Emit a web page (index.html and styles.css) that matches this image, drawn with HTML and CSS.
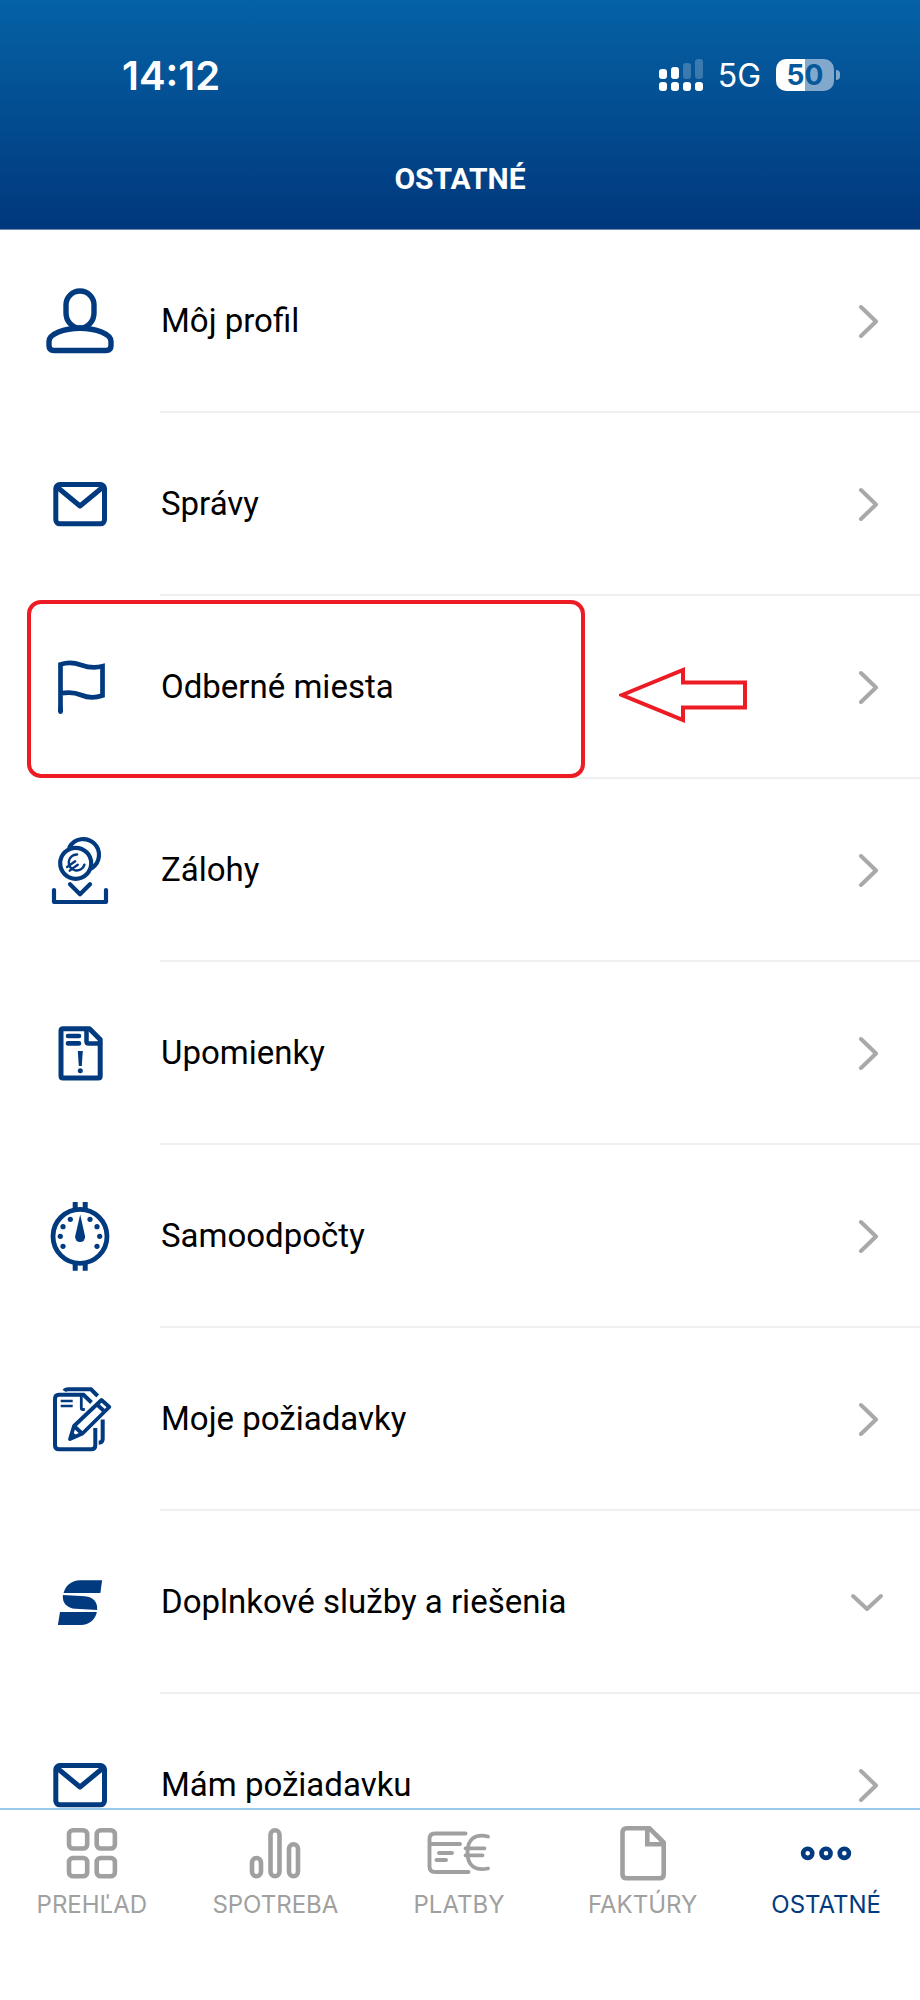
FILE: index.html
```html
<!DOCTYPE html>
<html lang="sk">
<head>
    <meta charset="UTF-8">
    <meta name="viewport" content="width=device-width, initial-scale=1.0">
    <title>Ostatné</title>
    <link rel="stylesheet" href="styles.css">
</head>
<body>
    <header class="header">
        <div class="status-bar">
            <span class="time">14:12</span>
            <div class="status-right">
                <svg class="signal" viewBox="0 0 44 32" fill="#fff">
                    <rect x="0" y="10" width="8" height="10" rx="3"/>
                    <rect x="12" y="8" width="8" height="12" rx="3"/>
                    <rect x="24" y="4" width="8" height="16" rx="3" opacity=".22"/>
                    <rect x="36" y="0" width="8" height="20" rx="3" opacity=".22"/>
                    <rect x="0" y="23" width="8" height="9" rx="3"/>
                    <rect x="12" y="23" width="8" height="9" rx="3"/>
                    <rect x="24" y="23" width="8" height="9" rx="3"/>
                    <rect x="36" y="23" width="8" height="9" rx="3"/>
                </svg>
                <span class="network">5G</span>
                <span class="battery">50</span>
            </div>
        </div>
        <h1 class="title">OSTATNÉ</h1>
    </header>

    <main class="menu">
        <a class="row" href="#profil">
            <svg class="icon" viewBox="0 0 73 73" stroke-width="5.4">
                <path d="M22 21a14 14 0 0 1 28 0v8c0 8-6 15-14 15s-14-7-14-15z"/>
                <path d="M36 44.3C20 44.3 5 50 5 57.5v4q0 5 5 5h52q5 0 5-5v-4C67 50 52 44.3 36 44.3z"/>
            </svg>
            <span class="label">Môj profil</span>
            <svg class="chevron" viewBox="0 0 35 35"><path d="M12 4l15 14.5-15 14.5"/></svg>
        </a>
        <a class="row" href="#spravy">
            <svg class="icon" viewBox="0 0 73 73" stroke-width="5">
                <rect x="11.8" y="17.5" width="48.7" height="39.3" rx="4"/>
                <path d="M13 20l23 19 23-19"/>
            </svg>
            <span class="label">Správy</span>
            <svg class="chevron" viewBox="0 0 35 35"><path d="M12 4l15 14.5-15 14.5"/></svg>
        </a>
        <a class="row" href="#odberne-miesta">
            <svg class="icon miter" viewBox="0 0 73 73" stroke-width="4.7">
                <path d="M16.5 62V14.5C24 12 30 12.5 37 15S50 18.5 58.5 16.3V45.5C50 48.5 44 48 37 45S24 42 16.5 43.5"/>
                <path d="M16.5 58v3.7" stroke-linecap="round"/>
            </svg>
            <span class="label">Odberné miesta</span>
            <svg class="chevron" viewBox="0 0 35 35"><path d="M12 4l15 14.5-15 14.5"/></svg>
            <span class="highlight"></span>
            <svg class="arrow" viewBox="0 0 128 56"><path d="M3 28L64 3v12.5h62v25H64V53z"/></svg>
        </a>
        <a class="row" href="#zalohy">
            <svg class="icon" viewBox="0 0 73 73" stroke-width="4.2">
                <circle cx="31.7" cy="30.3" r="15.5"/>
                <path d="M25.5 14A15.8 15.8 0 1 1 48 35"/>
                <g transform="rotate(-36 31.7 30.3)" stroke-width="2.4">
                    <path d="M38 24a8 8 0 1 0 0 12.500M22.500 28.300h10M22.500 32.700h10"/>
                </g>
                <path d="M26 51.3l10 10 10-10M10 57v12h52V57"/>
            </svg>
            <span class="label">Zálohy</span>
            <svg class="chevron" viewBox="0 0 35 35"><path d="M12 4l15 14.5-15 14.5"/></svg>
        </a>
        <a class="row" href="#upomienky">
            <svg class="icon" viewBox="0 0 73 73" stroke-width="5">
                <path d="M19 12.8h26.5L56.2 23.5V60q0 2-2 2H19q-2 0-2-2V14.8q0-2 2-2z"/>
                <path d="M42.5 14v11.5q0 2 2 2H56" stroke-width="4.5"/>
                <path d="M24 20h11M24 27.4h11" stroke-width="4.6"/>
                <path d="M33.8 35h5l-1 15h-3z" class="solid"/>
                <circle cx="36.3" cy="54.7" r="2.5" class="solid"/>
            </svg>
            <span class="label">Upomienky</span>
            <svg class="chevron" viewBox="0 0 35 35"><path d="M12 4l15 14.5-15 14.5"/></svg>
        </a>
        <a class="row" href="#samoodpocty">
            <svg class="icon" viewBox="0 0 73 73" stroke-width="4.8">
                <circle cx="36" cy="37.3" r="27"/>
                <g class="solid">
                    <path d="M28.7 3h5v7h-5zM38.7 3h5v7h-5zM28.7 65h5v6.7h-5zM38.7 65h5v6.7h-5z"/>
                    <path d="M36.2 15.5L41 37a5 5 0 1 1-9.8 0z"/>
                    <circle cx="26.3" cy="20.3" r="2.6"/>
                    <circle cx="46" cy="20.3" r="2.6"/>
                    <circle cx="19" cy="27.7" r="2.6"/>
                    <circle cx="53" cy="27.7" r="2.6"/>
                    <circle cx="16.3" cy="37.3" r="2.6"/>
                    <circle cx="55.7" cy="37.3" r="2.6"/>
                    <circle cx="19" cy="47.3" r="2.6"/>
                    <circle cx="53" cy="47.3" r="2.6"/>
                </g>
            </svg>
            <span class="label">Samoodpočty</span>
            <svg class="chevron" viewBox="0 0 35 35"><path d="M12 4l15 14.5-15 14.5"/></svg>
        </a>
        <a class="row" href="#moje-poziadavky">
            <svg class="icon miter" viewBox="0 0 73 73" stroke-width="4">
                <path d="M51.3 46v17.3q0 4-4 4H15q-4 0-4-4V16.7q0-4 4-4h24.5l8 7.8"/>
                <path d="M37.3 14v12.5q0 1 1 1h2.5" stroke-width="2.8"/>
                <path d="M16.7 19h12M16.7 24h12" stroke-width="2.4"/>
                <path d="M20.3 9q1-1.7 4-1.7H47l6.7 6.7M58.7 37.5V57q0 3.7-4 3.7"/>
                <path d="M26 57l4-13L57.5 18l7.8 7L38.5 51.5zM53 22.5l7 6.5M30 44l8 7.5" stroke-width="3.8" stroke-linejoin="round"/>
                <path d="M25.5 57.5l2.5-8 5 4.5z" class="solid"/>
            </svg>
            <span class="label">Moje požiadavky</span>
            <svg class="chevron" viewBox="0 0 35 35"><path d="M12 4l15 14.5-15 14.5"/></svg>
        </a>
        <button class="row" type="button" aria-expanded="false">
            <svg class="icon" viewBox="0 0 73 73">
                <g class="solid">
                    <path d="M58.1 15.3L56.4 28H19.6c1.5-7 8-12.7 16.4-12.7z"/>
                    <path d="M18.9 30l22 1.3c8 .5 13 5.7 12.2 13.7l-21.5-1.2C23 43.3 18 38 18.9 30z"/>
                    <path d="M16 47h36.8c-1 7-7.8 13-15.8 13H13.9z"/>
                </g>
            </svg>
            <span class="label">Doplnkové služby a riešenia</span>
            <svg class="chevron" viewBox="0 0 35 35"><path d="M4 12l14 13 14-13"/></svg>
        </button>
        <a class="row" href="#mam-poziadavku">
            <svg class="icon" viewBox="0 0 73 73" stroke-width="5">
                <rect x="11.8" y="17.5" width="48.7" height="39.3" rx="4"/>
                <path d="M13 20l23 19 23-19"/>
            </svg>
            <span class="label">Mám požiadavku</span>
            <svg class="chevron" viewBox="0 0 35 35"><path d="M12 4l15 14.5-15 14.5"/></svg>
        </a>
    </main>

    <nav class="tabs">
        <a class="tab" href="#prehlad">
            <svg class="tab-icon" viewBox="0 0 64 56" stroke-width="4.6">
                <rect x="9" y="4.3" width="18.2" height="18.2" rx="4"/>
                <rect x="36.7" y="4.3" width="18.2" height="18.2" rx="4"/>
                <rect x="9" y="32" width="18.2" height="18.2" rx="4"/>
                <rect x="36.7" y="32" width="18.2" height="18.2" rx="4"/>
            </svg>
            <span>PREHĽAD</span>
        </a>
        <a class="tab" href="#spotreba">
            <svg class="tab-icon" viewBox="0 0 64 56" stroke-width="4.6">
                <rect x="9" y="32" width="9" height="18.3" rx="4.5"/>
                <rect x="27.5" y="4.3" width="9" height="46" rx="4.5"/>
                <rect x="46" y="18.3" width="9" height="32" rx="4.5"/>
            </svg>
            <span>SPOTREBA</span>
        </a>
        <a class="tab" href="#platby">
            <svg class="tab-icon" viewBox="0 0 64 56" stroke-width="3.9">
                <path d="M38.5 7.5H8q-5.5 0-5.5 5.5v27.5q0 5.5 5.5 5.5h33.5M3 18h30M12 27h13M9.5 34h9.500"/>
                <path d="M61 10.5C48 7.5 40.500 13 40.500 26.500S48 45 61 42.500M38.500 22.300H57.500M38.500 29.300h17" stroke-width="3.8"/>
            </svg>
            <span>PLATBY</span>
        </a>
        <a class="tab" href="#faktury">
            <svg class="tab-icon" viewBox="0 0 64 56" stroke-width="4.6">
                <path d="M15.5 2.3h23L52.7 16.5v31.8q0 4-4 4H15.5q-4 0-4-4v-42q0-4 4-4z"/>
                <path d="M36.3 3v15.3h16" class="miter"/>
            </svg>
            <span>FAKTÚRY</span>
        </a>
        <a class="tab active" href="#ostatne" aria-current="page">
            <svg class="tab-icon" viewBox="0 0 64 56" stroke-width="4.6">
                <circle cx="13.7" cy="27.3" r="4.6"/>
                <circle cx="32" cy="27.3" r="4.6"/>
                <circle cx="50.3" cy="27.3" r="4.6"/>
            </svg>
            <span>OSTATNÉ</span>
        </a>
    </nav>
</body>
</html>
```

FILE: styles.css
```css
* {
    box-sizing: border-box;
}
body {
    margin: 0;
    height: 100vh;
    display: flex;
    flex-direction: column;
    background: #fff;
    font-family: Roboto, sans-serif;
}
.header {
    flex: none;
    padding: 51px 0 28px;
    background: linear-gradient(#0562a5, #01377c);
    border-bottom: 1px solid #6f86ad;
    color: #fff;
}
.status-bar {
    display: flex;
    justify-content: space-between;
    align-items: center;
    height: 48px;
    padding: 0 86px 0 122px;
    font-family: Inter, sans-serif;
}
.time {
    font-size: 40px;
    font-weight: 600;
}
.status-right {
    display: flex;
    align-items: center;
    gap: 15px;
}
.signal {
    width: 44px;
    height: 32px;
}
.network {
    font-size: 32px;
}
.battery {
    position: relative;
    width: 58px;
    height: 32px;
    border-radius: 10px;
    background: linear-gradient(90deg, #fff 50%, #82a9cc 50%);
    color: #06589b;
    font-size: 28px;
    font-weight: 700;
    line-height: 32px;
    text-align: center;
}
.battery::after {
    content: "";
    position: absolute;
    left: 60px;
    top: 11px;
    width: 4px;
    height: 10px;
    border-radius: 0 4px 4px 0;
    background: #82a9cc;
}
.title {
    margin: 58px 0 0;
    font-size: 30px;
    font-weight: 700;
    line-height: 44px;
    text-align: center;
}

/* menu list */
.menu {
    flex: 1;
    min-height: 0;
    overflow-y: auto;
    scrollbar-width: none;
}
.row {
    position: relative;
    display: flex;
    align-items: center;
    gap: 44px;
    width: 100%;
    height: 183px;
    padding: 0 36px 2px 44px;
    border: 0;
    background: none;
    color: #000;
    font-family: inherit;
    font-size: 33px;
    text-align: left;
    text-decoration: none;
}
.row::after {
    content: "";
    position: absolute;
    left: 160px;
    right: 0;
    bottom: 0;
    height: 2px;
    background: #f0f0f0;
}
.icon {
    flex: none;
    width: 73px;
    height: 73px;
    fill: none;
    stroke: #023a7f;
    stroke-linecap: round;
    stroke-linejoin: round;
}
.miter {
    stroke-linecap: butt;
    stroke-linejoin: miter;
}
.solid {
    fill: #023a7f;
    stroke: none;
}
.label {
    flex: 1;
}
.chevron {
    flex: none;
    width: 35px;
    height: 35px;
    fill: none;
    stroke: #a9a9a9;
    stroke-width: 4;
    stroke-linecap: round;
    stroke-linejoin: round;
}
.highlight {
    position: absolute;
    z-index: 1;
    left: 27px;
    top: 4px;
    width: 558px;
    height: 178px;
    border: 4px solid #ed1c24;
    border-radius: 14px;
}
.arrow {
    position: absolute;
    left: 619px;
    top: 71px;
    width: 128px;
    height: 56px;
    fill: none;
    stroke: #ed1c24;
    stroke-width: 4;
}

/* bottom navigation */
.tabs {
    flex: none;
    display: flex;
    height: 192px;
    padding: 16px 2px 0 0;
    border-top: 2px solid #96cbec;
    background: #fff;
}
.tab {
    flex: 1;
    display: flex;
    flex-direction: column;
    align-items: center;
    gap: 9px;
    color: #a0a0a0;
    font-family: Inter, sans-serif;
    font-size: 24px;
    line-height: 28px;
    text-decoration: none;
}
.tab-icon {
    width: 64px;
    height: 56px;
    fill: none;
    stroke: currentColor;
    stroke-linecap: round;
    stroke-linejoin: round;
}
.active {
    color: #023a7f;
}
```
